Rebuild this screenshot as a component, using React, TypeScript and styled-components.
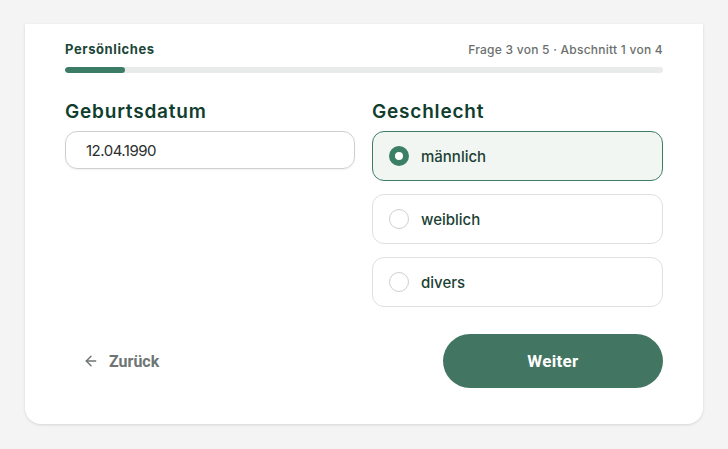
import React, { useState } from 'react';
import styled, { createGlobalStyle } from 'styled-components';

const GlobalStyle = createGlobalStyle`
  html, body {
    margin: 0;
    padding: 0;
    background: #f4f4f4;
    font-family: Inter, 'Open Sans', sans-serif;
  }
`;

const Page = styled.div`
  width: 728px;
  height: 449px;
  box-sizing: border-box;
  padding: 24px 25px 0 25px;
`;

const Card = styled.div`
  background: #fff;
  border-radius: 0 0 16px 16px;
  box-shadow: 0 1px 3px rgba(0, 0, 0, 0.12);
  padding: 15px 40px 36px 40px;
  height: 400px;
  box-sizing: border-box;
  display: flex;
  flex-direction: column;
`;

const Header = styled.div`
  display: flex;
  justify-content: space-between;
  align-items: center;
  height: 20px;
`;

const Section = styled.span`
  font-size: 13px;
  font-weight: 700;
  letter-spacing: 0.6px;
  color: #1c4638;
`;

const StepInfo = styled.span`
  font-size: 12px;
  font-weight: 500;
  letter-spacing: 0.25px;
  color: #6b6f6e;
`;

const Track = styled.div`
  margin-top: 8px;
  height: 6px;
  border-radius: 3px;
  background: #e9ebea;
  overflow: hidden;
`;

const Fill = styled.div`
  height: 100%;
  border-radius: 3px;
  background: #3b7c66;
`;

const Columns = styled.div`
  display: grid;
  grid-template-columns: 290px 1fr;
  column-gap: 17px;
  margin-top: 27px;
`;

const Field = styled.div`
  display: flex;
  flex-direction: column;
`;

const Label = styled.div`
  font-size: 19px;
  font-weight: 600;
  letter-spacing: 0.8px;
  color: #0f3d2e;
  line-height: 24px;
  margin-bottom: 7px;
`;

const DateInput = styled.div`
  height: 38px;
  box-sizing: border-box;
  border: 1px solid #cfcfcf;
  border-radius: 12px;
  padding: 0 20px;
  display: flex;
  align-items: center;
  font-size: 15px;
  letter-spacing: -0.5px;
  color: #2a2e2d;
  box-shadow: 0 1px 2px rgba(0, 0, 0, 0.06);
`;

const Options = styled.div`
  display: flex;
  flex-direction: column;
  gap: 13px;
`;

const Option = styled.div<{ $active: boolean }>`
  height: 50px;
  box-sizing: border-box;
  border-radius: 12px;
  border: 1px solid ${(p) => (p.$active ? '#3d7d67' : '#e0e0e0')};
  background: ${(p) => (p.$active ? '#f1f6f3' : '#fff')};
  display: flex;
  align-items: center;
  padding-left: 16px;
  gap: 12px;
  cursor: pointer;
`;

const Radio = styled.span<{ $active: boolean }>`
  width: 20px;
  height: 20px;
  box-sizing: border-box;
  border-radius: 50%;
  border: ${(p) => (p.$active ? '6px solid #3b8066' : '1px solid #cfcfcf')};
  background: #fff;
`;

const OptionText = styled.span`
  font-size: 15px;
  font-weight: 500;
  color: #1c3f34;
`;

const Footer = styled.div`
  margin-top: auto;
  display: flex;
  justify-content: space-between;
  align-items: center;
`;

const BackButton = styled.button`
  border: none;
  background: transparent;
  display: flex;
  align-items: center;
  gap: 10px;
  padding: 0 0 0 18px;
  font-family: Roboto, sans-serif;
  font-size: 16px;
  font-weight: 700;
  color: #6f7574;
  cursor: pointer;
`;

const NextButton = styled.button`
  width: 220px;
  height: 54px;
  border: none;
  border-radius: 27px;
  background: #427562;
  color: #fff;
  font-family: Roboto, sans-serif;
  font-size: 17px;
  font-weight: 700;
  letter-spacing: 0.3px;
  cursor: pointer;
`;

const options = ['männlich', 'weiblich', 'divers'];

export default function App() {
  const [selected, setSelected] = useState('männlich');
  return (
    <>
      <GlobalStyle />
      <Page>
        <Card>
          <Header>
            <Section>Persönliches</Section>
            <StepInfo>Frage 3 von 5 · Abschnitt 1 von 4</StepInfo>
          </Header>
          <Track>
            <Fill style={{ width: '10%' }} />
          </Track>
          <Columns>
            <Field>
              <Label>Geburtsdatum</Label>
              <DateInput>12.04.1990</DateInput>
            </Field>
            <Field>
              <Label>Geschlecht</Label>
              <Options>
                {options.map((o) => (
                  <Option key={o} $active={selected === o} onClick={() => setSelected(o)}>
                    <Radio $active={selected === o} />
                    <OptionText>{o}</OptionText>
                  </Option>
                ))}
              </Options>
            </Field>
          </Columns>
          <Footer>
            <BackButton>
              <svg width="16" height="16" viewBox="0 0 24 24" fill="none" stroke="#6f7574" strokeWidth="2.2" strokeLinecap="round" strokeLinejoin="round">
                <path d="M19 12H5" />
                <path d="M12 19l-7-7 7-7" />
              </svg>
              Zurück
            </BackButton>
            <NextButton>Weiter</NextButton>
          </Footer>
        </Card>
      </Page>
    </>
  );
}
